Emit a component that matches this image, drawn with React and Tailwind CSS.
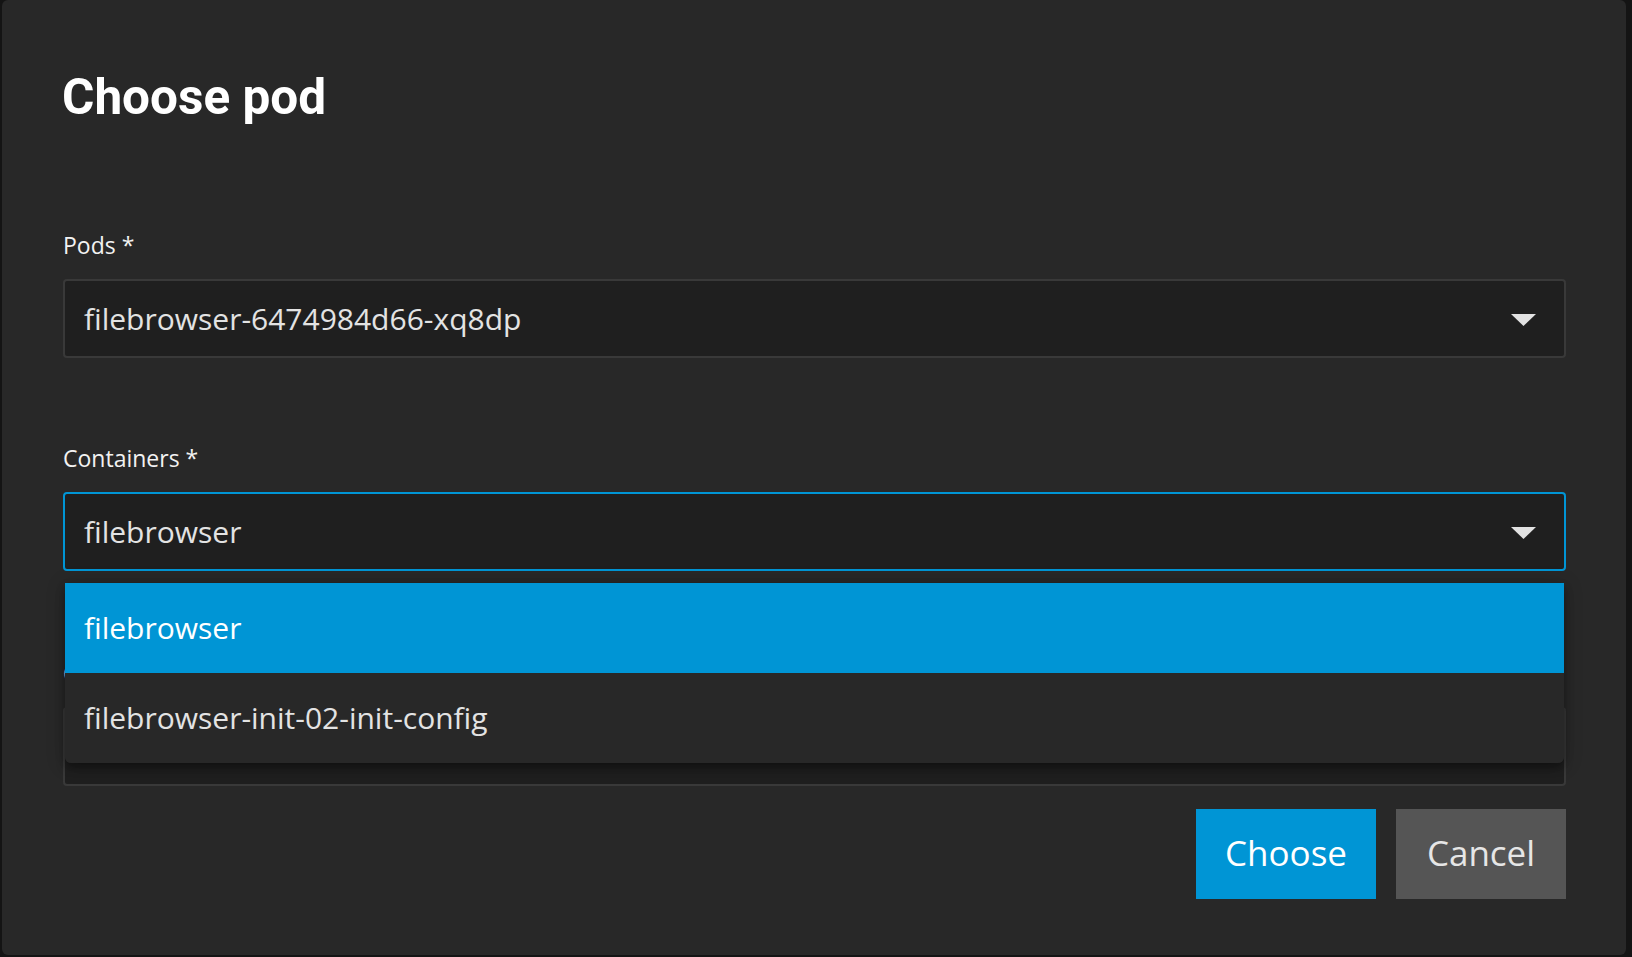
import { useState } from 'react';

const PODS = ['filebrowser-6474984d66-xq8dp'];
const CONTAINERS = ['filebrowser', 'filebrowser-init-02-init-config'];

const body = "font-['Open_Sans',sans-serif]";

function Caret() {
  return (
    <svg width="25" height="12" viewBox="0 0 25 12" className="shrink-0 mt-[3px]">
      <path d="M0 0 H25 L12.5 12 Z" fill="#e2e2e2" />
    </svg>
  );
}

function SelectBox({ value, focused }) {
  return (
    <div
      className={`h-[79px] w-full rounded-[4px] border-2 bg-[#1f1f1f] pl-[19px] pr-[28px] pt-[1px] flex items-center justify-between ${
        focused ? 'border-[#0095d5]' : 'border-[#393939]'
      }`}
    >
      <span className={`${body} text-[30px] text-[#e3e3e3]`}>{value}</span>
      <Caret />
    </div>
  );
}

function Field({ label, children, className = '' }) {
  return (
    <div className={`relative ${className}`}>
      <div className={`${body} text-[23px] leading-none text-[#f2f2f2] mb-[22px]`}>{label}</div>
      {children}
    </div>
  );
}

export default function App() {
  const [container, setContainer] = useState(CONTAINERS[0]);

  return (
    <div className="w-[1632px] h-[957px] bg-[#141414] overflow-hidden">
      <div className="ml-[2px] w-[1624px] h-[955px] rounded-[6px] bg-[#282828] pt-[73px] pl-[61px] pr-[60px] flex flex-col">
        <h1 className="-ml-[1px] font-['Roboto',sans-serif] font-bold text-[49.5px] leading-none text-white">Choose pod</h1>

        <Field label="Pods *" className="mt-[111px]">
          <SelectBox value={PODS[0]} />
        </Field>

        <Field label="Containers *" className="mt-[89px] z-10">
          <SelectBox value={container} focused />

          {/* open option list, drawn over the next field */}
          <div className="absolute left-[2px] right-[2px] top-[136px] rounded-b-[6px] bg-[#282828] overflow-hidden shadow-[0_5px_8px_rgba(0,0,0,0.35),0_2px_20px_rgba(0,0,0,0.2)]">
            {CONTAINERS.map((c) => (
              <div
                key={c}
                onClick={() => setContainer(c)}
                className={`h-[90px] pl-[19px] flex items-center ${body} text-[30px] ${
                  c === container ? 'bg-[#0095d5] text-white' : 'bg-[#282828] text-[#e3e3e3]'
                }`}
              >
                {c}
              </div>
            ))}
          </div>
        </Field>

        <Field label="Commands *" className="mt-[91px]">
          <SelectBox value="/bin/sh" />
        </Field>

        <div className="mt-[23px] flex justify-end gap-[20px]">
          <button className={`h-[90px] w-[180px] bg-[#0095d5] text-white ${body} text-[35px]`}>Choose</button>
          <button className={`h-[90px] w-[170px] bg-[#555555] text-[#e6e6e6] ${body} text-[35px]`}>Cancel</button>
        </div>
      </div>
    </div>
  );
}
